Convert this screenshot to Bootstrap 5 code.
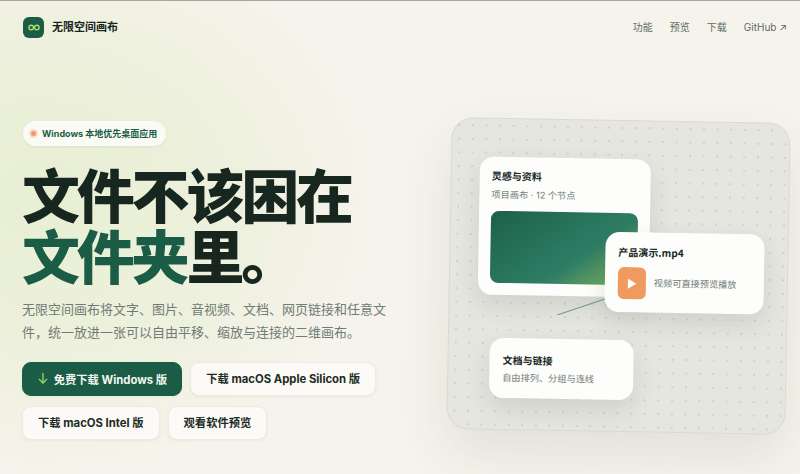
<!DOCTYPE html>
<html lang="zh-CN">
<head>
<meta charset="UTF-8" />
<title>无限空间画布</title>
<meta name="viewport" content="width=device-width,initial-scale=1" />
<link rel="stylesheet" href="https://cdn.jsdelivr.net/npm/bootstrap@5.3.1/dist/css/bootstrap.min.css" />
<style>
  html, body { height: 100%; }
  body {
    overflow: hidden;
    font-family: Inter, "Noto Sans CJK SC", sans-serif;
    color: #17261f;
    background:
      radial-gradient(ellipse 340px 280px at 40px 200px, #e8efd3 0%, rgba(232,239,211,.6) 55%, rgba(232,239,211,0) 100%),
      #f6f3ec;
    border-top: 1px solid #a8a69a;
  }
  .top-bar { height: 52px; padding: 0 13px 0 23px; }
  .logo-box { width: 21px; height: 21px; border-radius: 6px; background: #1a5c46; }
  .brand-name { font-size: 11px; font-weight: 700; color: #17261f; margin-left: 0; }
  .top-links { gap: 17px; }
  .top-links a { font-size: 10px; color: #5f6a64; text-decoration: none; }
  .hero-wrap { padding-left: 22px; }
  .hero-left { width: 420px; padding-top: 65px; }
  .tag-pill {
    height: 25px; padding: 0 9px 0 8px; gap: 6px; border-radius: 13px; margin-left: 1px;
    background: #fbfbf6; font-size: 9px; font-weight: 700; color: #1a5c46;
    box-shadow: 0 1px 3px rgba(40,60,40,.07);
  }
  .tag-dot { width: 5px; height: 5px; border-radius: 50%; background: #ee9b66; box-shadow: 0 0 0 2px #f9dcc8; }
  .hero-title {
    margin: 17px 0 12px; font-size: 58px; line-height: 61px; font-weight: 900;
    letter-spacing: -3.2px; color: #17261f; font-family: "Noto Sans CJK SC", sans-serif;
  }
  .hero-title span { color: #1a5c46; }
  .hero-sub { width: 372px; margin-bottom: 19px; font-size: 13px; line-height: 23px; color: #707b75; font-family: "Noto Sans CJK SC", sans-serif; }
  .btn-rows { width: 360px; gap: 10px 8px; }
  .act-btn {
    height: 34px; padding: 0 15px; border-radius: 9px; font-size: 11.3px; font-weight: 700; line-height: 32px;
    background: #fbfaf6; color: #1d2a24; border: 1px solid #ecebe3; box-shadow: 0 1px 3px rgba(40,50,40,.05);
  }
  .act-btn.main-btn { background: #1a5c46; border-color: #1a5c46; color: #f4f7ef; padding: 0 14px; }
  .act-btn.main-btn i { font-style: normal; color: #a6dc6a; margin-right: 5px; font-weight: 400; font-size: 14px; }
  .board {
    position: absolute; left: 449px; top: 120px; width: 339px; height: 312px;
    transform: rotate(1deg); border-radius: 22px; border: 1px solid #d9dbd2;
    background-color: #e4e6df;
    background-image: radial-gradient(circle, #cfd2c8 0.8px, transparent 1.1px);
    background-size: 13.6px 13.6px;
    box-shadow: 0 24px 50px rgba(60,65,50,.10);
  }
  .wire { position: absolute; left: 0; top: 0; }
  .node {
    position: absolute; background: #fdfdfb; border-radius: 14px;
    box-shadow: 0 10px 24px rgba(50,60,50,.12);
  }
  .node h6 { margin: 0; font-size: 10px; font-weight: 700; color: #17261f; line-height: 14px; font-family: "Noto Sans CJK SC", sans-serif; }
  .node p { margin: 0; font-size: 9.2px; line-height: 14px; color: #727c76; }
  .node-a { left: 28px; top: 38px; width: 171px; height: 138px; padding: 12px 12px; }
  .node-a .mt-1 { margin-top: 5px !important; }
  .node-b { left: 155px; top: 111px; width: 159px; height: 80px; padding: 13px 13px; }
  .node-c { left: 41px; top: 219px; width: 144px; height: 60px; padding: 15px 13px; }
  .thumb {
    height: 72px; margin-top: 9px; border-radius: 8px;
    background: linear-gradient(145deg, #1c6149 0%, #2f7d65 62%, #8abb5f 100%);
  }
  .play-tile { width: 28px; height: 32px; border-radius: 6px; background: #ef9a5e; }
  .media-row { gap: 8px; margin-top: 8px; }
</style>
</head>
<body>
  <nav class="top-bar d-flex align-items-center justify-content-between">
    <a href="#" class="d-flex align-items-center gap-2 text-decoration-none">
      <span class="logo-box d-flex align-items-center justify-content-center">
        <svg width="12" height="7" viewBox="0 0 12 7" fill="none" stroke="#a6dc6a" stroke-width="1.4">
          <circle cx="3.2" cy="3.5" r="2.3" /><circle cx="8.8" cy="3.5" r="2.3" />
        </svg>
      </span>
      <span class="brand-name">无限空间画布</span>
    </a>
    <div class="top-links d-flex align-items-center">
      <a href="#">功能</a>
      <a href="#">预览</a>
      <a href="#">下载</a>
      <a href="#">GitHub ↗</a>
    </div>
  </nav>

  <main class="hero-wrap">
    <section class="hero-left">
      <div class="tag-pill d-inline-flex align-items-center">
        <span class="tag-dot"></span>
        <span>Windows 本地优先桌面应用</span>
      </div>
      <h1 class="hero-title">文件不该困在<br /><span>文件夹</span>里。</h1>
      <p class="hero-sub">无限空间画布将文字、图片、音视频、文档、网页链接和任意文件，统一放进一张可以自由平移、缩放与连接的二维画布。</p>
      <div class="btn-rows d-flex flex-wrap">
        <a href="#" class="act-btn main-btn text-decoration-none"><i>↓</i>免费下载 Windows 版</a>
        <a href="#" class="act-btn text-decoration-none">下载 macOS Apple Silicon 版</a>
        <a href="#" class="act-btn text-decoration-none">下载 macOS Intel 版</a>
        <a href="#" class="act-btn text-decoration-none">观看软件预览</a>
      </div>
    </section>

    <section class="board">
      <svg class="wire" width="339" height="312" fill="none">
        <line x1="108" y1="195" x2="156" y2="178" stroke="#7f9c8f" stroke-width="1" />
      </svg>
      <div class="node node-a">
        <h6>灵感与资料</h6>
        <p class="mt-1">项目画布 · 12 个节点</p>
        <div class="thumb"></div>
      </div>
      <div class="node node-b">
        <h6>产品演示.mp4</h6>
        <div class="media-row d-flex align-items-center">
          <span class="play-tile d-flex align-items-center justify-content-center">
            <svg width="10" height="11" viewBox="0 0 10 11"><path d="M1 .5 9.5 5.5 1 10.5z" fill="#fff" /></svg>
          </span>
          <p>视频可直接预览播放</p>
        </div>
      </div>
      <div class="node node-c">
        <h6>文档与链接</h6>
        <p class="mt-1">自由排列、分组与连线</p>
      </div>
    </section>
  </main>
  <script src="https://cdn.jsdelivr.net/npm/bootstrap@5.3.1/dist/js/bootstrap.bundle.min.js"></script>
</body>
</html>
